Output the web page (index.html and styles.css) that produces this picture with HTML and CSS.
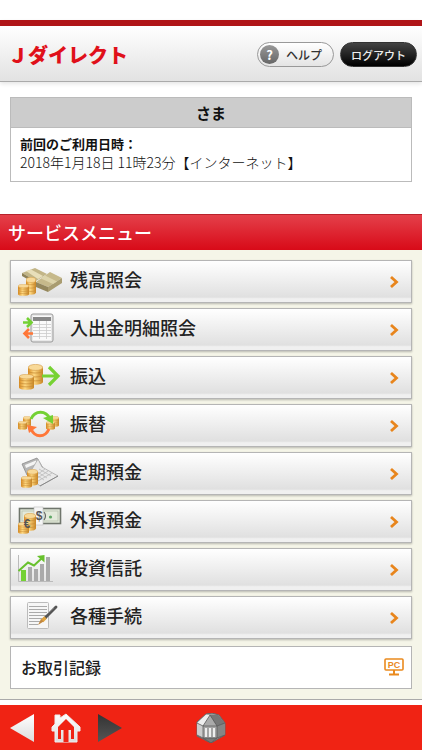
FILE: index.html
```
<!DOCTYPE html>
<html lang="ja">
<head>
    <meta charset="UTF-8">
    <meta name="viewport" content="width=device-width, initial-scale=1.0">
    <title>Ｊダイレクト</title>
    <link rel="stylesheet" href="styles.css">
</head>
<body>
    <!-- 共通で使うアイコン部品 -->
    <svg class="defs" width="0" height="0" aria-hidden="true">
        <defs>
            <linearGradient id="gold">
                <stop offset="0" stop-color="#d98a20"/>
                <stop offset=".4" stop-color="#ffd982"/>
                <stop offset="1" stop-color="#c98524"/>
            </linearGradient>
            <linearGradient id="white" x2="0" y2="1">
                <stop offset="0" stop-color="#fff"/>
                <stop offset="1" stop-color="#dcdcdc"/>
            </linearGradient>
            <linearGradient id="dark" x2="0" y2="1">
                <stop offset="0" stop-color="#333"/>
                <stop offset="1" stop-color="#555"/>
            </linearGradient>
        </defs>
        <symbol id="coins" viewBox="0 0 12 16" preserveAspectRatio="none">
            <path d="M0 2.5V13.5C0 16.5 12 16.5 12 13.5V2.5Z" fill="url(#gold)"/>
            <path d="M0 5.5C1 7.3 11 7.3 12 5.5M0 8.5C1 10.3 11 10.3 12 8.5M0 11.5C1 13.3 11 13.3 12 11.5" fill="none" stroke="#c58a35" stroke-width=".6"/>
            <ellipse cx="6" cy="2.6" rx="5.8" ry="2.3" fill="#f8d998" stroke="#d59c48" stroke-width=".5"/>
        </symbol>
        <symbol id="chevron" viewBox="0 0 10 14">
            <path d="M2 2L7.5 7L2 12" fill="none" stroke="#e8851c" stroke-width="2.8"/>
        </symbol>
    </svg>

    <header class="header">
        <h1 class="logo">Ｊダイレクト</h1>
        <div class="header-buttons">
            <button type="button" class="btn btn-help"><span class="btn-mark">?</span>ヘルプ</button>
            <button type="button" class="btn btn-logout">ログアウト</button>
        </div>
    </header>

    <section class="user">
        <h2 class="user-name">さま</h2>
        <div class="user-body">
            <strong>前回のご利用日時：</strong>
            <p>2018年1月18日 11時23分【インターネット】</p>
        </div>
    </section>

    <main class="service">
        <h2 class="service-title">サービスメニュー</h2>
        <nav class="menu">
            <a href="#" class="menu-item">
                <svg class="icon" viewBox="0 0 48 36" aria-hidden="true">
                    <path d="M6 9L19 4L31 10L20 17Z" fill="#c2b587"/>
                    <path d="M6 9V12L20 20V17Z" fill="#8f8258"/>
                    <path d="M10 7L15 5.5L27 12L22 15Z" fill="#e8dfba"/>
                    <path d="M20 18L34 8L46 14L32 23Z" fill="#c6b98b"/>
                    <path d="M20 18V23L32 28V23Z" fill="#94875d"/>
                    <path d="M32 23V28L46 19V14Z" fill="#a99c70"/>
                    <path d="M25 14.500L29 11.500L41 17.500L37 20Z" fill="#ddd4ab"/>
                    <use href="#coins" x="10" y="13" width="10" height="18"/>
                    <use href="#coins" x="2" y="20" width="11" height="12"/>
                </svg>
                <span>残高照会</span>
                <svg class="arrow"><use href="#chevron"/></svg>
            </a>
            <a href="#" class="menu-item">
                <svg class="icon" viewBox="0 0 48 36" aria-hidden="true">
                    <rect x="15" y="2" width="22" height="28" rx="2" fill="#e9e9e9" stroke="#999"/>
                    <rect x="17" y="4" width="18" height="24" fill="#fafafa"/>
                    <rect x="17" y="5" width="18" height="4" fill="#888"/>
                    <path d="M17 12.500H35M17 15.500H35M17 18.500H35M17 21.500H35M17 24.500H35M23.500 9V27M30.500 9V27" stroke="#ccc" stroke-width=".8"/>
                    <path d="M7 10.500H15M11 6L15.500 10.500L11 15" fill="none" stroke="#74d134" stroke-width="2.600"/>
                    <path d="M17 21.500H9M13 17L8.500 21.500L13 26" fill="none" stroke="#ff7738" stroke-width="2.600"/>
                </svg>
                <span>入出金明細照会</span>
                <svg class="arrow"><use href="#chevron"/></svg>
            </a>
            <a href="#" class="menu-item">
                <svg class="icon" viewBox="0 0 48 36" aria-hidden="true">
                    <use href="#coins" x="12" y="4" width="15" height="21"/>
                    <use href="#coins" x="3" y="14" width="15" height="16"/>
                    <path d="M26 16H41M33 7L42 16L33 25" fill="none" stroke="#76d233" stroke-width="3.200"/>
                </svg>
                <span>振込</span>
                <svg class="arrow"><use href="#chevron"/></svg>
            </a>
            <a href="#" class="menu-item">
                <svg class="icon" viewBox="0 0 48 36" aria-hidden="true">
                    <use href="#coins" x="7" y="8" width="8" height="11"/>
                    <use href="#coins" x="2" y="13" width="9" height="9"/>
                    <use href="#coins" x="35" y="8" width="8" height="11"/>
                    <use href="#coins" x="30" y="13" width="9" height="9"/>
                    <path d="M15 11C19 2 30 2 34 11" fill="none" stroke="#74d134" stroke-width="3"/>
                    <path d="M27 10L37 7V16Z" fill="#74d134"/>
                    <path d="M33 21C29 30 19 30 15 21" fill="none" stroke="#ff7738" stroke-width="3"/>
                    <path d="M11 17L21 19L13 25Z" fill="#ff7738"/>
                </svg>
                <span>振替</span>
                <svg class="arrow"><use href="#chevron"/></svg>
            </a>
            <a href="#" class="menu-item">
                <svg class="icon" viewBox="0 0 48 36" aria-hidden="true">
                    <path d="M6 8L21 2L27 12L11 19Z" fill="#b5b5b5" stroke="#8c8c8c" stroke-width=".8"/>
                    <path d="M9 9L20 4.500L22 7L10 12Z" fill="#f4f4f4"/>
                    <path d="M22 3L26 11L42 20L24 30L12 20Z" fill="#e9e9e9" stroke="#aaa" stroke-width=".8"/>
                    <path d="M17 17L28 24M20 15L31 22M23 13L35 20M18 21L29 13M22 25L36 17M20 23L32 15" stroke="#bbb" stroke-width=".8"/>
                    <path d="M24 30L42 20" stroke="#888"/>
                    <use href="#coins" x="11" y="13" width="11" height="17"/>
                    <use href="#coins" x="5" y="20" width="11" height="12"/>
                </svg>
                <span>定期預金</span>
                <svg class="arrow"><use href="#chevron"/></svg>
            </a>
            <a href="#" class="menu-item">
                <svg class="icon" viewBox="0 0 48 36" aria-hidden="true">
                    <rect x="3.500" y="4.500" width="41" height="15" fill="#e3eadb" stroke="#6f756c" stroke-width="1.600"/>
                    <rect x="6" y="7" width="36" height="10" fill="none" stroke="#b8c2b0" stroke-width=".8"/>
                    <circle cx="34.500" cy="13" r="1.600" fill="#5fa866"/>
                    <rect x="18" y="3" width="9" height="18" fill="#f5f5f5" stroke="#bbb" stroke-width=".6"/>
                    <text x="23" y="16" class="bill-mark">$</text>
                    <path d="M28 8Q31 12 28 16" fill="none" stroke="#666" stroke-width="1.200"/>
                    <use href="#coins" x="8" y="9" width="12" height="18"/>
                    <use href="#coins" x="2" y="18" width="11" height="12"/>
                    <text x="11" y="24" class="bill-mark">€</text>
                </svg>
                <span>外貨預金</span>
                <svg class="arrow"><use href="#chevron"/></svg>
            </a>
            <a href="#" class="menu-item">
                <svg class="icon" viewBox="0 0 48 36" aria-hidden="true">
                    <path d="M2.500 3V29.500H37" fill="none" stroke="#bbb"/>
                    <path d="M12 15H16V29H12ZM18 17H22V29H18ZM24 12H28V29H24ZM30 5H34V29H30Z" fill="#aaa"/>
                    <path d="M5 18H10V29H5Z" fill="#74d134"/>
                    <path d="M2.500 19L12 10.500L18 13.500L26 6" fill="none" stroke="#68c12d" stroke-width="2"/>
                    <path d="M21 4L28.500 3V10.500Z" fill="#68c12d"/>
                </svg>
                <span>投資信託</span>
                <svg class="arrow"><use href="#chevron"/></svg>
            </a>
            <a href="#" class="menu-item">
                <svg class="icon" viewBox="0 0 48 36" aria-hidden="true">
                    <rect x="11.500" y="2.500" width="21" height="26" rx="1" fill="#f6f6f6" stroke="#bbb"/>
                    <path d="M13 6.500H31M13 9.500H31M13 12.500H31M13 15.500H31M13 18.500H31M13 21.500H26M13 24.500H22" stroke="#aaa"/>
                    <path d="M40 7L29 18" stroke="#555" stroke-width="2.800" stroke-linecap="round"/>
                    <path d="M38 7.500L31 14" stroke="#aaa" stroke-width=".8"/>
                    <path d="M29.500 17.500L26 21" stroke="#e0a33e" stroke-width="3.500"/>
                    <path d="M27.500 21.500L22 25L25 19Z" fill="#c08740"/>
                </svg>
                <span>各種手続</span>
                <svg class="arrow"><use href="#chevron"/></svg>
            </a>
            <a href="#" class="record">
                <span>お取引記録</span>
                <svg class="pc" viewBox="0 0 20 18" role="img" aria-label="PC">
                    <rect x="1" y="1" width="18" height="11" rx="1" fill="#fff" stroke="#ea8a1e" stroke-width="1.600"/>
                    <path d="M10 12V16M5 16.500H15" stroke="#ea8a1e" stroke-width="2"/>
                    <text x="10" y="10" class="pc-text">PC</text>
                </svg>
            </a>
        </nav>
    </main>

    <footer class="toolbar">
        <div class="toolbar-nav">
            <button type="button" class="tool" aria-label="戻る">
                <svg viewBox="0 0 24 28"><path d="M0 14L24 0V28Z" fill="url(#white)"/></svg>
            </button>
            <button type="button" class="tool tool-home" aria-label="ホーム">
                <svg viewBox="0 0 30 30">
                    <path d="M4 2H9V5L15 1L29 14V18H26V29H4V18H1V14L4 11Z" fill="url(#white)" stroke="#eee" stroke-linejoin="round"/>
                    <path d="M15 6L23 14V26H20V16H10V26H7V14Z" fill="#f02314"/>
                    <path d="M10 13H20V17H10ZM12.500 17H17.500V29H12.500Z" fill="#f02314"/>
                </svg>
            </button>
            <button type="button" class="tool" aria-label="進む">
                <svg viewBox="0 0 24 28"><path d="M24 14L0 0V28Z" fill="url(#dark)"/></svg>
            </button>
        </div>
        <button type="button" class="tool tool-home" aria-label="メニュー">
            <svg viewBox="0 0 30 30">
                <path d="M1 9L10 1L16 0L23 2L29 10V22L15 30L1 23Z" fill="#999" stroke="#666"/>
                <path d="M1 10L10 1.500L14 2L7 13Z" fill="#eee"/>
                <path d="M14 2L7 13H21Z" fill="#aaa"/>
                <path d="M14 2L22 2L29 10L21 13Z" fill="#777"/>
                <path d="M1 10L7 13V25L1 22Z" fill="#ccc"/>
                <path d="M7 13H21V25H7Z" fill="#a5a5a5"/>
                <path d="M21 13L29 10V22L21 25Z" fill="#858585"/>
                <path d="M7 25H21L15 30Z" fill="#777"/>
                <path d="M10 15V24M14 15V24M18 15V24" stroke="#eee" stroke-width="2"/>
                <path d="M1 10L7 13H21L29 10M7 13L14 2L21 13V25H7ZM1 22L7 25L15 30L21 25L29 22" fill="none" stroke="#555" stroke-width=".7"/>
            </svg>
        </button>
    </footer>
</body>
</html>
```
FILE: styles.css
```
* {
    box-sizing: border-box;
}

body {
    margin: 0;
    padding-top: 20px;
    min-height: 100vh;
    display: flex;
    flex-direction: column;
    font-family: "Noto Sans CJK JP", sans-serif;
    color: #111;
    background: #fff;
}

h1, h2, p {
    margin: 0;
}

button {
    font-family: inherit;
    cursor: pointer;
}

.defs {
    position: absolute;
}

/* ヘッダー */
.header {
    display: flex;
    justify-content: space-between;
    align-items: center;
    height: 62px;
    padding: 2px 5px 0 8px;
    border-top: 6px solid #b01518;
    border-bottom: 1px solid #aaa;
    background: linear-gradient(#fff, #e2e2e2);
    box-shadow: 0 2px 4px rgba(0, 0, 0, 0.1);
}

.logo {
    font-size: 20px;
    line-height: 30px;
    font-weight: 900;
    color: #e0101a;
}

.header-buttons {
    display: flex;
    gap: 6px;
}

.btn {
    display: flex;
    align-items: center;
    justify-content: center;
    width: 77px;
    height: 25px;
    padding: 0;
    border-radius: 13px;
    font-size: 11px;
    font-weight: 500;
}

.btn-help {
    justify-content: flex-start;
    gap: 7px;
    padding-left: 2px;
    border: 1px solid #999;
    background: linear-gradient(#fff, #e4e4e4);
    color: #333;
    font-size: 12px;
}

.btn-mark {
    width: 19px;
    height: 19px;
    border-radius: 50%;
    background: linear-gradient(#999, #666);
    color: #fff;
    font-size: 13px;
    font-weight: 700;
    line-height: 19px;
}

.btn-logout {
    border: 1px solid #333;
    background: linear-gradient(#444, #000);
    color: #eee;
}

/* 利用者情報 */
.user {
    margin: 15px 10px 32px;
    border: 1px solid #bbb;
}

.user-name {
    border-bottom: 1px solid #bbb;
    background: #ccc;
    font-size: 15px;
    line-height: 29px;
    text-align: center;
}

.user-body {
    padding: 6px 9px 9px;
    font-size: 14px;
    line-height: 19px;
}

.user-body strong {
    display: block;
    font-size: 13px;
}

.user-body p {
    font-weight: 300;
}

/* サービスメニュー */
.service {
    border-bottom: 1px solid #aaa;
    background: #f5f5e8;
}

.service-title {
    padding-left: 8px;
    border-top: 1px solid #b8222c;
    background: linear-gradient(#e4404a, #d80a18);
    color: #fff;
    font-size: 18px;
    font-weight: 500;
    line-height: 35px;
}

.menu {
    display: flex;
    flex-direction: column;
    gap: 5px;
    padding: 10px;
}

.menu-item,
.record {
    display: flex;
    align-items: center;
    height: 43px;
    border: 1px solid #b5b5b5;
    color: #222;
    text-decoration: none;
}

.menu-item {
    gap: 6px;
    padding: 0 12px 0 5px;
    background: linear-gradient(#fff, #e0e0e0 88%, #f0f0f0 92%);
    box-shadow: 0 1px 2px rgba(0, 0, 0, 0.25);
    font-size: 18px;
    font-weight: 500;
}

.menu-item span {
    flex: 1;
    padding-bottom: 6px;
    line-height: 26px;
}

.icon {
    width: 48px;
    height: 36px;
}

.arrow {
    width: 10px;
    height: 14px;
}

.bill-mark {
    font: bold 12px "Liberation Sans", sans-serif;
    text-anchor: middle;
    fill: #555;
}

.record {
    justify-content: space-between;
    margin-top: 2px;
    padding: 0 7px 2px 10px;
    background: #fff;
    font-size: 16px;
    font-weight: 500;
}

.pc {
    width: 20px;
    height: 18px;
}

.pc-text {
    font: bold 9px "Liberation Sans", sans-serif;
    text-anchor: middle;
    fill: #ea8a1e;
}

/* 下部ツールバー */
.toolbar {
    display: grid;
    grid-template-columns: 1fr auto 1fr;
    align-items: center;
    height: 45px;
    margin-top: auto;
    padding: 0 10px;
    background: #f02314;
}

.toolbar-nav {
    display: flex;
    align-items: center;
    gap: 17px;
}

.tool {
    width: 24px;
    height: 28px;
    padding: 0;
    border: 0;
    background: none;
}

.tool-home {
    width: 30px;
    height: 30px;
}

.tool-home:first-of-type {
    justify-self: center;
}

.tool svg {
    display: block;
    width: 100%;
    height: 100%;
}
```
